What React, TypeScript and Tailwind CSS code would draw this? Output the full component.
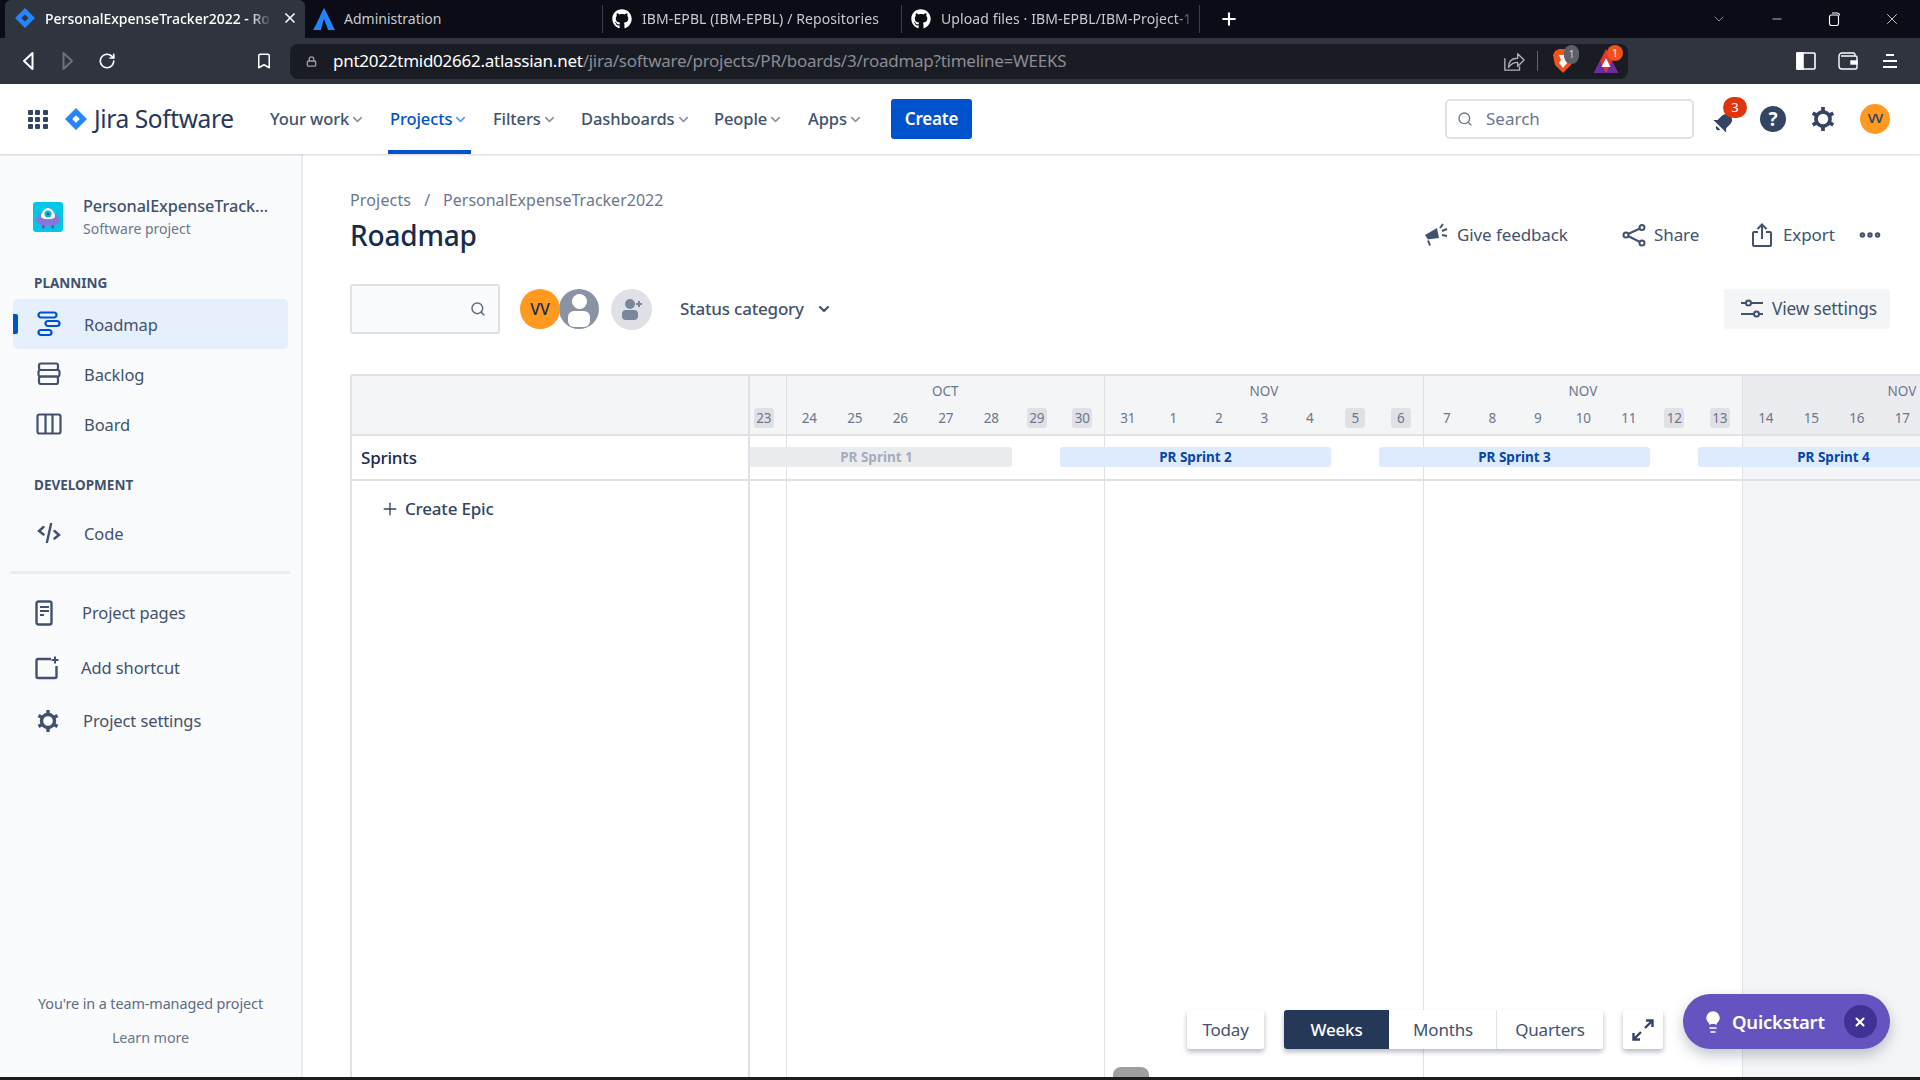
import { ChevronDown, Search, Plus, RotateCw, Bookmark, Lock, X, Minus, Ellipsis, Lightbulb } from "lucide-react"
import { FaGithub } from "react-icons/fa"

const navItems = [
  { label: "Your work", width: "w-[120px]" },
  { label: "Projects", width: "w-[103px]", active: true },
  { label: "Filters", width: "w-[88px]" },
  { label: "Dashboards", width: "w-[133px]" },
  { label: "People", width: "w-[94px]" },
  { label: "Apps", width: "w-[84px]" },
]

const weeks = [
  { month: "", days: [23], width: "w-[45.5px]" },
  { month: "OCT", days: [24, 25, 26, 27, 28, 29, 30], width: "w-[318.5px]" },
  { month: "NOV", days: [31, 1, 2, 3, 4, 5, 6], width: "w-[319px]" },
  { month: "NOV", days: [7, 8, 9, 10, 11, 12, 13], width: "w-[319px]" },
  { month: "NOV", days: [14, 15, 16, 17], width: "w-[319px]", current: true },
]

const weekend = [23, 29, 30, 5, 6, 12, 13]

function JiraMark({ size = 20 }: { size?: number }) {
  return (
    <svg width={size} height={size} viewBox="0 0 20 20">
      <path fillRule="evenodd" d="M10 0 20 10 10 20 0 10ZM10 6.5 6.5 10 10 13.5 13.5 10Z" fill="#2684ff" />
    </svg>
  )
}

function ChromeTab({ title, icon, width }: { title: string; icon: React.ReactNode; width: string }) {
  return (
    <div className={`${width} h-[28px] flex items-center flex-none border-r border-[#3b3d47]`}>
      <div className="w-[9px]" />
      {icon}
      <span className="ml-[10px] mb-[2px] text-[14px] text-[#c8cad0] whitespace-nowrap overflow-hidden w-[255px] tracking-[0.1px] [mask-image:linear-gradient(to_right,black_92%,transparent)]">{title}</span>
    </div>
  )
}

function BrowserChrome() {
  return (
    <div className="flex-none">
      <div className="h-[38px] bg-[#0b0c15] flex items-center">
        <div className="ml-[5px] w-[300px] h-[38px] bg-[#30343f] rounded-t-[6px] flex items-center flex-none">
          <div className="ml-[10px] mb-[2px]"><JiraMark size={20} /></div>
          <span className="ml-[10px] mb-[2px] w-[227px] text-[14px] text-white font-medium whitespace-nowrap overflow-hidden [mask-image:linear-gradient(to_right,black_90%,transparent)]">PersonalExpenseTracker2022 - Ro</span>
          <X size={16} className="ml-[10px] mb-[2px] text-white" strokeWidth={2.5} />
        </div>
        <div className="w-[298px] h-[28px] flex items-center flex-none border-r border-[#3b3d47]">
          <svg width="22" height="24" viewBox="0 0 22 24" className="ml-[8px]">
            <path d="M11 1 C8 6 5 15 0 23 H8 C9 18 10 15 11 12 C12 15 14 19 15 23 H22 C18 15 14 6 11 1Z" fill="#2684ff" />
          </svg>
          <span className="ml-[9px] mb-[2px] text-[14px] text-[#c8cad0]">Administration</span>
        </div>
        <ChromeTab title="IBM-EPBL (IBM-EPBL) / Repositories" width="w-[299px]" icon={<FaGithub size={20} className="text-white flex-none" />} />
        <ChromeTab title="Upload files · IBM-EPBL/IBM-Project-1" width="w-[298px]" icon={<FaGithub size={20} className="text-white flex-none" />} />
        <Plus size={20} strokeWidth={2.5} className="ml-[19px] text-white" />
        <ChevronDown size={16} strokeWidth={1} className="ml-[472px] text-[#c8cad0]" />
        <Minus size={14} strokeWidth={1.2} className="ml-[43px] text-white" />
        <svg width="14" height="14" viewBox="0 0 14 14" className="ml-[43px]" fill="none" stroke="white" strokeWidth="1.1">
          <rect x="2.5" y="3" width="9" height="10.5" rx="2" />
          <path d="M5 1h5a2.5 2.5 0 0 1 2.5 2.5" />
        </svg>
        <X size={18} strokeWidth={1} className="ml-[42px] text-white" />
      </div>
      <div className="h-[46px] bg-[#30343f] flex items-center">
        <svg width="12" height="20" viewBox="0 0 12 20" className="ml-[22px]" fill="none" stroke="white" strokeWidth="2">
          <path d="M10.500 2v16L2 10Z" strokeLinejoin="round" />
        </svg>
        <svg width="12" height="20" viewBox="0 0 12 20" className="ml-[28px]" fill="none" stroke="#6d707a" strokeWidth="2">
          <path d="M1.500 2v16L10 10Z" strokeLinejoin="round" />
        </svg>
        <RotateCw size={18} strokeWidth={2.2} className="ml-[24px] text-white" />
        <Bookmark size={18} strokeWidth={2} className="ml-[139px] text-white" />
        <div className="ml-[17px] w-[1338px] h-[35px] rounded-[8px] bg-[#1a1c23] flex items-center">
          <Lock size={11} strokeWidth={3} className="ml-[16px] text-[#9a9ca3]" />
          <span className="ml-[16px] w-[732px] text-[17px] tracking-[-0.25px] text-white whitespace-nowrap">pnt2022tmid02662.atlassian.net<span className="text-[#8a8c94]">/jira/software/projects/PR/boards/3/roadmap?timeline=WEEKS</span></span>
          <svg width="22" height="22" viewBox="0 0 24 24" className="ml-[438px]" fill="none" stroke="#aeb0b6" strokeWidth="1.5" strokeLinejoin="round">
            <path d="M2 9v13h16v-4" />
            <path d="M6 19c0-7 4-10 10-10V4l7 7-7 7v-4.500c-4 0-7 1-10 5.500Z" />
          </svg>
          <div className="ml-[12px] w-px h-[20px] bg-[#62646c]" />
          <div className="ml-[15px] relative">
            <svg width="20" height="26" viewBox="0 0 20 26">
              <path d="M2 3 6 1h8l4 2 2 4-2 10-8 8-8-8L0 7Z" fill="#f1521d" />
              <path d="M6 7h8l-2 5 2 3-4 5-4-5 2-3Z" fill="#fff" />
            </svg>
            <span className="absolute -top-[3px] left-[11px] w-[15px] h-[19px] rounded-full bg-[#5e6069] text-[10px] text-[#d6d7da] flex items-center justify-center">1</span>
          </div>
          <div className="ml-[21px] relative">
            <svg width="24" height="24" viewBox="0 0 24 24">
              <path d="M12 0 24 24H0Z" fill="#e5352b" />
              <path d="M0 24 6 12 12 24Z" fill="#6d2ba3" />
              <path d="M24 24 18 12 12 24Z" fill="#6d2ba3" />
              <path d="M12 9 16.500 18H7.500Z" fill="#fff" />
            </svg>
            <span className="absolute -top-[4px] left-[13px] w-[16px] h-[16px] rounded-full bg-[#f1521d] text-[10px] text-white flex items-center justify-center">1</span>
          </div>
        </div>
        <svg width="20" height="18" viewBox="0 0 20 18" className="ml-[168px]" fill="none" stroke="white" strokeWidth="1.6">
          <rect x="1" y="1" width="18" height="16" rx="1" />
          <rect x="1" y="1" width="6" height="16" fill="white" />
        </svg>
        <svg width="20" height="18" viewBox="0 0 20 18" className="ml-[22px]" fill="none" stroke="white" strokeWidth="1.4">
          <path d="M17 4V2.5A1.5 1.5 0 0 0 15.500 1H4A3 3 0 0 0 1 4v10a3 3 0 0 0 3 3h13.500a1.500 1.500 0 0 0 1.500-1.500V5.500A1.500 1.500 0 0 0 17.500 4H3" />
          <rect x="13" y="9" width="6" height="3" fill="white" />
        </svg>
        <div className="ml-[25px] flex flex-col gap-[4px] items-center w-[14px]">
          <div className="w-[8px] h-[2px] bg-white" />
          <div className="w-[14px] h-[2px] bg-white" />
          <div className="w-[14px] h-[2px] bg-white" />
        </div>
      </div>
    </div>
  )
}

function TopNav() {
  return (
    <div className="h-[70px] flex-none bg-white flex items-center shadow-[0_1px_2px_rgba(9,30,66,0.2)] relative z-10 text-[#42526e]">
      <div className="ml-[28px] w-[20px] grid grid-cols-3 gap-[2px]">
        {Array.from({ length: 9 }).map((_, i) => (
          <div key={i} className="w-[5px] h-[5px] rounded-[1px] bg-[#344563]" />
        ))}
      </div>
      <div className="ml-[17px]"><JiraMark size={22} /></div>
      <span className="ml-[7px] w-[140px] text-[24.500px] text-[#253858] tracking-[-0.4px] whitespace-nowrap">Jira Software</span>
      <div className="ml-[34px] flex h-full">
        {navItems.map((n) => (
          <div key={n.label} className={`${n.width} relative flex items-center pl-[2px] ${n.active ? "text-[#0052cc]" : "text-[#42526e]"}`}>
            <span className="text-[16.500px] font-medium whitespace-nowrap tracking-[-0.1px]">{n.label}</span>
            <ChevronDown size={15} strokeWidth={2.5} className={`ml-[1px] ${n.active ? "text-[#4c9aff]" : "text-[#8993a4]"}`} />
            {n.active && <div className="absolute left-0 bottom-0 w-[83px] h-[4px] bg-[#0052cc]" />}
          </div>
        ))}
      </div>
      <div className="ml-[1px] w-[81px] h-[40px] rounded-[3px] bg-[#0052cc] flex items-center justify-center text-white text-[17px] font-semibold tracking-[-0.2px]">Create</div>
      <div className="ml-[473px] w-[249px] h-[40px] rounded-[5px] border-2 border-[#dfe1e6] flex items-center">
        <Search size={16} strokeWidth={2} className="ml-[10px] text-[#6b778c]" />
        <span className="ml-[13px] text-[17px] text-[#6b778c]">Search</span>
      </div>
      <div className="ml-[18px] relative w-[24px] h-[24px]">
        <svg width="24" height="24" viewBox="0 0 24 24" fill="#344563" className="mt-[3px]">
          <g transform="rotate(45 12 12)">
            <path d="M12 3a6 6 0 0 1 6 6v6l3 3H3l3-3V9a6 6 0 0 1 6-6Z" />
            <path d="M9.500 20h5a2.500 2.500 0 0 1-5 0Z" />
          </g>
        </svg>
        <span className="absolute -top-[10px] left-[11px] w-[24px] h-[21px] rounded-full bg-[#de350b] text-[13px] text-white flex items-center justify-center">3</span>
      </div>
      <div className="ml-[24px] w-[26px] h-[26px] rounded-full bg-[#344563] flex items-center justify-center text-white text-[19px] font-bold">?</div>
      <svg width="26" height="26" viewBox="0 0 24 24" className="ml-[24px]" fill="none" stroke="#344563" strokeWidth="3.400">
        <circle cx="12" cy="12" r="6.500" />
        <path d="M12 1v4M12 19v4M2.500 6.500l3.500 2M18 15.500l3.500 2M2.500 17.500l3.500-2M18 8.500l3.500-2" />
      </svg>
      <div className="ml-[24px] w-[30px] h-[30px] rounded-full bg-[#ff991f] flex items-center justify-center text-[#344563] text-[13px] font-semibold tracking-[-1px]">VV</div>
    </div>
  )
}

function SideItem({ icon, label, active }: { icon: React.ReactNode; label: string; active?: boolean }) {
  return (
    <div className={`relative h-[50px] mx-[13px] w-[275px] rounded-[5px] flex items-center ${active ? "bg-[#e6effc]" : ""}`}>
      {active && <div className="absolute left-0 top-[15px] w-[5px] h-[20px] rounded-r-[2px] bg-[#0052cc]" />}
      <div className="ml-[23px] w-[26px] flex justify-center">{icon}</div>
      <span className="ml-[22px] mt-[2px] text-[16.500px] text-[#42526e] tracking-[-0.1px]">{label}</span>
    </div>
  )
}

function Sidebar() {
  return (
    <div className="w-[303px] flex-none h-full bg-[#fafbfc] border-r-2 border-[#ebecf0] flex flex-col">
      <div className="mt-[40px] ml-[33px] flex items-center h-[46px]">
        <svg width="30" height="30" viewBox="0 0 30 30">
          <rect width="30" height="30" rx="3" fill="#00c7e6" />
          <ellipse cx="15" cy="17.500" rx="12" ry="7" fill="#8777d9" />
          <path d="M8 15a7 9 0 0 1 14 0c-2 3-12 3-14 0Z" fill="#fff" />
          <circle cx="15" cy="12" r="3.500" fill="#00b8d9" />
          <circle cx="15" cy="12" r="1.300" fill="#403294" />
          <rect x="9" y="23" width="2.500" height="3.500" fill="#6554c0" />
          <rect x="18.500" y="23" width="2.500" height="3.500" fill="#6554c0" />
        </svg>
        <div className="ml-[20px] flex flex-col">
          <span className="text-[16.300px] leading-[24px] font-medium text-[#42526e] tracking-[-0.1px]">PersonalExpenseTrack...</span>
          <span className="text-[14px] leading-[22px] text-[#6b778c]">Software project</span>
        </div>
      </div>
      <div className="mt-[33px] ml-[34px] h-[20px] flex items-center text-[13.500px] font-bold text-[#42526e]">PLANNING</div>
      <div className="mt-[6px]">
        <SideItem active label="Roadmap" icon={
          <svg width="24" height="26" viewBox="0 0 24 26" fill="none" stroke="#0052cc" strokeWidth="2.200">
            <rect x="1.500" y="1.500" width="18" height="5" rx="2.500" />
            <rect x="8.500" y="10" width="14" height="5" rx="2.500" />
            <rect x="1.500" y="19" width="13" height="5" rx="2.500" />
          </svg>
        } />
        <SideItem label="Backlog" icon={
          <svg width="24" height="24" viewBox="0 0 24 24" fill="none" stroke="#42526e" strokeWidth="2.200">
            <rect x="2" y="1.500" width="19" height="6.500" rx="2" />
            <rect x="1.500" y="8" width="21" height="6.500" rx="2" />
            <rect x="2" y="14.500" width="19" height="7.500" rx="2" />
          </svg>
        } />
        <SideItem label="Board" icon={
          <svg width="26" height="22" viewBox="0 0 26 22" fill="none" stroke="#42526e" strokeWidth="2.200">
            <rect x="1.500" y="1.500" width="23" height="19" rx="2" />
            <path d="M9.500 1.500v19M16.500 1.500v19" />
          </svg>
        } />
      </div>
      <div className="mt-[26px] ml-[34px] h-[20px] flex items-center text-[13.500px] font-bold text-[#42526e]">DEVELOPMENT</div>
      <div className="mt-[13px]">
        <SideItem label="Code" icon={
          <svg width="24" height="20" viewBox="0 0 24 20" fill="none" stroke="#42526e" strokeWidth="2.400" strokeLinecap="round">
            <path d="M6.500 4 2 8l4.500 3.500M17.500 8 22 12l-4.500 3.500M14 1 10 19" />
          </svg>
        } />
      </div>
      <div className="mt-[13px] ml-[10px] w-[280px] h-[3px] bg-[#ebecf0]" />
      <div className="mt-[14px] ml-[10px] flex flex-col text-[16.500px] text-[#42526e] tracking-[-0.1px]">
        <div className="h-[50px] flex items-center">
          <svg width="20" height="26" viewBox="0 0 20 26" className="ml-[25px]" fill="none" stroke="#42526e" strokeWidth="2.400">
            <rect x="1.500" y="1.500" width="15" height="23" rx="2" />
            <path d="M5 7h9M5 11h9M5 15h4" strokeWidth="2" />
          </svg>
          <span className="ml-[27px]">Project pages</span>
        </div>
        <div className="h-[50px] mt-[5px] flex items-center">
          <svg width="24" height="24" viewBox="0 0 24 24" className="ml-[25px]" fill="none" stroke="#42526e" strokeWidth="2.400">
            <path d="M16 3H3a1.500 1.500 0 0 0-1.500 1.500v16A1.500 1.500 0 0 0 3 22h17a1.500 1.500 0 0 0 1.500-1.500V10" />
            <path d="M20 0.500v7M16.500 4h7" strokeWidth="2" />
          </svg>
          <span className="ml-[22px]">Add shortcut</span>
        </div>
        <div className="h-[50px] mt-[3px] flex items-center">
          <svg width="24" height="24" viewBox="0 0 24 24" className="ml-[26px]" fill="none" stroke="#42526e" strokeWidth="3.400">
            <circle cx="12" cy="12" r="6.500" />
            <path d="M12 1v4M12 19v4M2.500 6.500l3.500 2M18 15.500l3.500 2M2.500 17.500l3.500-2M18 8.500l3.500-2" />
          </svg>
          <span className="ml-[23px]">Project settings</span>
        </div>
      </div>
      <div className="mt-auto mb-[29px] flex flex-col items-center text-[14.400px] text-[#5e6c84] tracking-[-0.1px]">
        <span className="h-[20px] leading-[20px]">You're in a team-managed project</span>
        <span className="h-[20px] leading-[20px] mt-[14px] text-[#6b778c]">Learn more</span>
      </div>
    </div>
  )
}

function PageHeader() {
  return (
    <div className="flex-none pl-[47px] pr-[30px]">
      <div className="pt-[34px] h-[58px] flex items-center text-[16px] text-[#6b778c]">
        <span className="tracking-[0.15px]">Projects</span>
        <span className="mx-[13px]">/</span>
        <span>PersonalExpenseTracker2022</span>
      </div>
      <div className="h-[46px] flex items-center text-[#42526e] text-[17px] tracking-[-0.1px]">
        <span className="text-[#172b4d] text-[28px] font-medium w-[1074px] tracking-[-0.2px]">Roadmap</span>
        <svg width="24" height="24" viewBox="0 0 24 24" fill="#42526e">
          <path d="M1 12 13 5l2 10-8 1-3 .5Z" />
          <path d="M4 17.500l2 5" stroke="#42526e" strokeWidth="2" />
          <path d="M16 5l3-4M18 8l5-2M18 12l5 1" stroke="#42526e" strokeWidth="2" />
        </svg>
        <span className="ml-[9px] w-[165px]">Give feedback</span>
        <svg width="24" height="24" viewBox="0 0 24 24" fill="none" stroke="#42526e" strokeWidth="2">
          <circle cx="20" cy="4.500" r="2.500" />
          <circle cx="4" cy="12" r="2.500" />
          <circle cx="20" cy="20" r="2.500" />
          <path d="M6 11 18 5.500M6 13l12 6" />
        </svg>
        <span className="ml-[8px] w-[98px]">Share</span>
        <svg width="20" height="24" viewBox="0 0 20 24" fill="none" stroke="#42526e" strokeWidth="2">
          <path d="M6 9H2a1 1 0 0 0-1 1v12a1 1 0 0 0 1 1h16a1 1 0 0 0 1-1V10a1 1 0 0 0-1-1h-4" />
          <path d="M10 16V2M5.500 6 10 1.500 14.500 6" />
        </svg>
        <span className="ml-[11px] w-[74px]">Export</span>
        <Ellipsis size={26} strokeWidth={3} className="text-[#42526e]" />
      </div>
      <div className="mt-[26px] h-[50px] flex items-center">
        <div className="w-[150px] h-[50px] rounded-[3px] border-2 border-[#dfe1e6] bg-[#fafbfc] flex items-center justify-end pr-[12px]">
          <Search size={16} strokeWidth={2.2} className="text-[#5e6c84]" />
        </div>
        <div className="ml-[20px] w-[40px] h-[40px] rounded-full bg-[#ff991f] relative z-10 flex items-center justify-center text-[#172b4d] text-[16px] font-medium">VV</div>
        <div className="-ml-[1px] w-[40px] h-[40px] rounded-full bg-[#8993a4] overflow-hidden flex flex-col items-center">
          <div className="mt-[5px] w-[15px] h-[15px] rounded-full bg-white" />
          <div className="mt-[2px] w-[22px] h-[16px] rounded-[6px] bg-white" />
        </div>
        <div className="ml-[12px] w-[41px] h-[41px] rounded-full bg-[#dfe1e6] flex items-center justify-center">
          <svg width="24" height="24" viewBox="0 0 24 24" fill="#7a869a">
            <circle cx="10" cy="7" r="5" />
            <rect x="2" y="13" width="16" height="10" rx="4" />
            <path d="M19 4v6M16 7h6" stroke="#7a869a" strokeWidth="2" />
          </svg>
        </div>
        <span className="ml-[28px] text-[17px] font-medium text-[#42526e] tracking-[-0.2px]">Status category</span>
        <ChevronDown size={16} strokeWidth={3.2} className="ml-[12px] text-[#42526e]" />
        <div className="ml-auto w-[166px] h-[40px] rounded-[3px] bg-[#f4f5f7] flex items-center">
          <svg width="24" height="22" viewBox="0 0 24 22" className="ml-[16px]" fill="none" stroke="#42526e" strokeWidth="2">
            <path d="M1 5h5M11 5h12M1 16h13M19 16h4" />
            <circle cx="8.500" cy="5" r="2.500" />
            <circle cx="16.500" cy="16" r="2.500" />
          </svg>
          <span className="ml-[8px] text-[17.300px] text-[#42526e] tracking-[-0.15px]">View settings</span>
        </div>
      </div>
    </div>
  )
}

function Timeline() {
  return (
    <div className="mt-[40px] ml-[47px] flex-1 min-h-0 flex border-l-2 border-t-2 border-[#dfe1e6] rounded-tl-[3px] overflow-hidden">
      <div className="w-[398px] flex-none border-r-2 border-[#dfe1e6] flex flex-col">
        <div className="h-[60px] flex-none bg-[#f4f5f7] border-b-2 border-[#dfe1e6]" />
        <div className="h-[45px] flex-none border-b-2 border-[#dfe1e6] flex items-center pl-[9px] text-[17px] font-medium text-[#172b4d] tracking-[-0.2px]">Sprints</div>
        <div className="mt-[15px] ml-[28px] flex items-center text-[17px] font-medium text-[#344563] tracking-[-0.2px]">
          <Plus size={20} strokeWidth={1.6} />
          <span className="ml-[5px]">Create Epic</span>
        </div>
      </div>
      <div className="flex-1 min-w-0 overflow-hidden">
        <div className="-ml-[9px] relative h-full w-[1400px] flex flex-col">
          <div className="flex h-[60px] flex-none border-b-2 border-[#dfe1e6] bg-[#f4f5f7]">
            {weeks.map((w, i) => (
              <div key={i} className={`${w.width} flex-none flex flex-col border-r border-[#dfe1e6] ${w.current ? "bg-[#ebecf0]" : ""}`}>
                <div className="h-[32px] pb-[2px] flex items-center justify-center text-[13.500px] text-[#6b778c]">{w.month}</div>
                <div className="flex h-[20px]">
                  {w.days.map((d) => (
                    <div key={d} className="w-[45.5px] flex-none flex justify-center">
                      <span className={`w-[20px] h-[20px] rounded-[3px] flex items-center justify-center text-[13.500px] tracking-[-0.3px] text-[#6b778c] ${weekend.includes(d) ? "bg-[#dfe1e6]" : ""}`}>{d}</span>
                    </div>
                  ))}
                </div>
              </div>
            ))}
          </div>
          <div className="flex-1 relative">
            <div className="absolute inset-0 flex">
              {weeks.map((w, i) => (
                <div key={i} className={`${w.width} flex-none border-r border-[#dfe1e6] ${w.current ? "bg-[#f4f5f7]" : ""}`} />
              ))}
            </div>
            <div className="relative h-[45px] border-b-2 border-[#dfe1e6] flex items-center gap-[48px] pb-[1px]">
              <div className="w-[271px] h-[20px] flex-none rounded-[3px] bg-[#ebecf0] flex items-center justify-center text-[13.500px] font-bold text-[#a5adba]">PR Sprint 1</div>
              <div className="w-[271px] h-[20px] flex-none rounded-[3px] bg-[#deebff] flex items-center justify-center text-[13.500px] font-bold text-[#0747a6]">PR Sprint 2</div>
              <div className="w-[271px] h-[20px] flex-none rounded-[3px] bg-[#deebff] flex items-center justify-center text-[13.500px] font-bold text-[#0747a6]">PR Sprint 3</div>
              <div className="w-[271px] h-[20px] flex-none rounded-[3px] bg-[#deebff] flex items-center justify-center text-[13.500px] font-bold text-[#0747a6]">PR Sprint 4</div>
            </div>
          </div>
        </div>
      </div>
    </div>
  )
}

function FloatingControls() {
  const card = "h-[39px] bg-white flex items-center justify-center text-[17px] text-[#42526e] tracking-[-0.2px]"
  return (
    <>
      <div className="absolute left-[884px] bottom-[28px] flex items-end text-[#42526e]">
        <div className={`${card} w-[77px] rounded-[3px] shadow-[0_3px_5px_rgba(9,30,66,0.3)]`}>Today</div>
        <div className="ml-[20px] flex rounded-[3px] overflow-hidden shadow-[0_3px_5px_rgba(9,30,66,0.3)]">
          <div className="w-[105px] h-[39px] bg-[#253858] flex items-center justify-center text-[17px] font-medium text-white tracking-[-0.2px]">Weeks</div>
          <div className={`${card} w-[108px] pl-[1px] border-r border-[#dfe1e6]`}>Months</div>
          <div className={`${card} w-[106px]`}>Quarters</div>
        </div>
        <div className={`${card} ml-[20px] w-[40px] rounded-[3px] shadow-[0_3px_5px_rgba(9,30,66,0.3)]`}>
          <svg width="22" height="22" viewBox="0 0 22 22" fill="none" stroke="#344563" strokeWidth="2.400">
            <path d="M13 9 20 2M14 1.500h6.500V8M9 13l-7 7M1.500 14v6.500H8" />
          </svg>
        </div>
      </div>
      <div className="absolute left-[1380px] bottom-[28px] w-[207px] h-[55px] rounded-full bg-[#6554c0] flex items-center shadow-[0_6px_14px_rgba(9,30,66,0.25)]">
        <Lightbulb size={24} fill="white" strokeWidth={1.5} className="ml-[18px] text-white" />
        <span className="ml-[7px] text-[18.500px] font-semibold text-white tracking-[-0.2px]">Quickstart</span>
        <div className="ml-[19px] w-[33px] h-[33px] rounded-full bg-[#403294] flex items-center justify-center">
          <X size={14} strokeWidth={3.6} className="text-white" />
        </div>
      </div>
      <div className="absolute left-[810px] bottom-0 w-[36px] h-[10px] rounded-t-[8px] bg-[#9f9f9f]" />
    </>
  )
}

export default function App() {
  return (
    <div className="w-[1920px] h-[1080px] overflow-hidden flex flex-col bg-white font-['Noto_Sans','Open_Sans',sans-serif]">
      <BrowserChrome />
      <TopNav />
      <div className="flex-1 min-h-0 flex">
        <Sidebar />
        <div className="flex-1 min-w-0 flex flex-col relative">
          <PageHeader />
          <Timeline />
          <FloatingControls />
        </div>
      </div>
      <div className="h-[3px] flex-none bg-[#1d1d1d]" />
    </div>
  )
}
